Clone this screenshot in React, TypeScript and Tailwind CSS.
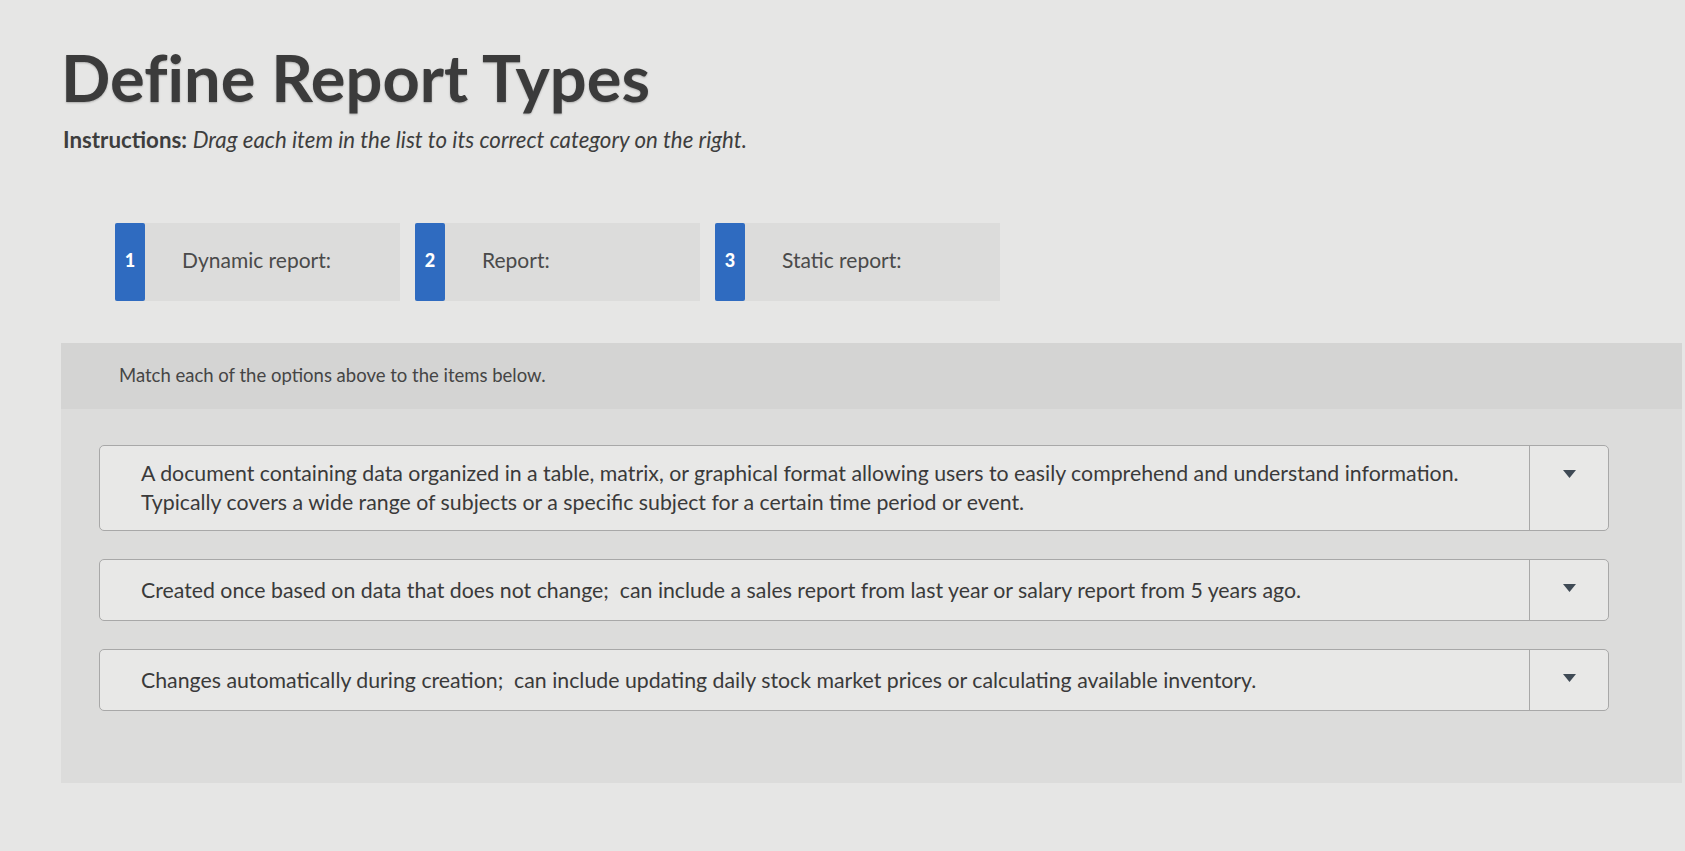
import React from "react";

const font = { fontFamily: "Lato, 'Open Sans', 'Liberation Sans', sans-serif" };

function Chip({ n, label }: { n: number; label: string }) {
  return (
    <div className="flex h-[78px] w-[285px] bg-[#dcdcdb]">
      <div className="flex w-[30px] items-center justify-center rounded-[2px] bg-[#2f6bc0] pb-[3px] text-[18px] font-black text-white">
        {n}
      </div>
      <div className="flex items-center pb-[4px] pl-[37px] text-[21px] text-[#4a4a4a]">{label}</div>
    </div>
  );
}

function Item({ lines, tall }: { lines: string[]; tall?: boolean }) {
  return (
    <div
      className={`flex rounded-[5px] border border-[#a8a8a8] bg-[#e8e8e7] ${tall ? "h-[86px]" : "h-[62px]"}`}
    >
      <div className="flex flex-1 flex-col justify-center whitespace-pre pl-[41px] text-[21.3px] leading-[29px] text-[#3a3a3a]">
        {lines.map((l) => (
          <div key={l}>{l}</div>
        ))}
      </div>
      <div className="flex w-[79px] justify-center border-l border-[#a8a8a8] pt-[24px]">
        <svg width="13" height="8" viewBox="0 0 13 8">
          <path d="M0 0 H13 L6.5 8 Z" fill="#3f4a55" />
        </svg>
      </div>
    </div>
  );
}

export default function App() {
  return (
    <div style={font} className="h-[851px] w-[1685px] overflow-hidden bg-[#e6e6e5]">
      <div className="pl-[61px] pt-[38px]">
        <h1 className="text-[65px] font-bold leading-[78px] text-[#3b3b3b] [font-variant-ligatures:none] [text-shadow:0_1px_2px_rgba(0,0,0,0.25)]">
          Define Report Types
        </h1>
        <p className="mt-[10px] pl-[2px] text-[22.3px] leading-[28px] text-[#3e3e3e]">
          <span className="font-bold">Instructions:</span>{" "}
          <span className="italic">Drag each item in the list to its correct category on the right.</span>
        </p>
      </div>
      <div className="ml-[115px] mt-[69px] flex gap-[15px]">
        <Chip n={1} label="Dynamic report:" />
        <Chip n={2} label="Report:" />
        <Chip n={3} label="Static report:" />
      </div>
      <div className="ml-[61px] mt-[42px] h-[440px] w-[1621px] bg-[#dcdcdb]">
        <div className="flex h-[66px] items-center bg-[#d4d4d3] pl-[58px] text-[18.5px] text-[#454545]">
          Match each of the options above to the items below.
        </div>
        <div className="flex flex-col gap-[28px] pl-[38px] pr-[73px] pt-[36px]">
          <Item
            tall
            lines={[
              "A document containing data organized in a table, matrix, or graphical format allowing users to easily comprehend and understand information.",
              "Typically covers a wide range of subjects or a specific subject for a certain time period or event.",
            ]}
          />
          <Item
            lines={[
              "Created once based on data that does not change;  can include a sales report from last year or salary report from 5 years ago.",
            ]}
          />
          <Item
            lines={[
              "Changes automatically during creation;  can include updating daily stock market prices or calculating available inventory.",
            ]}
          />
        </div>
      </div>
    </div>
  );
}
